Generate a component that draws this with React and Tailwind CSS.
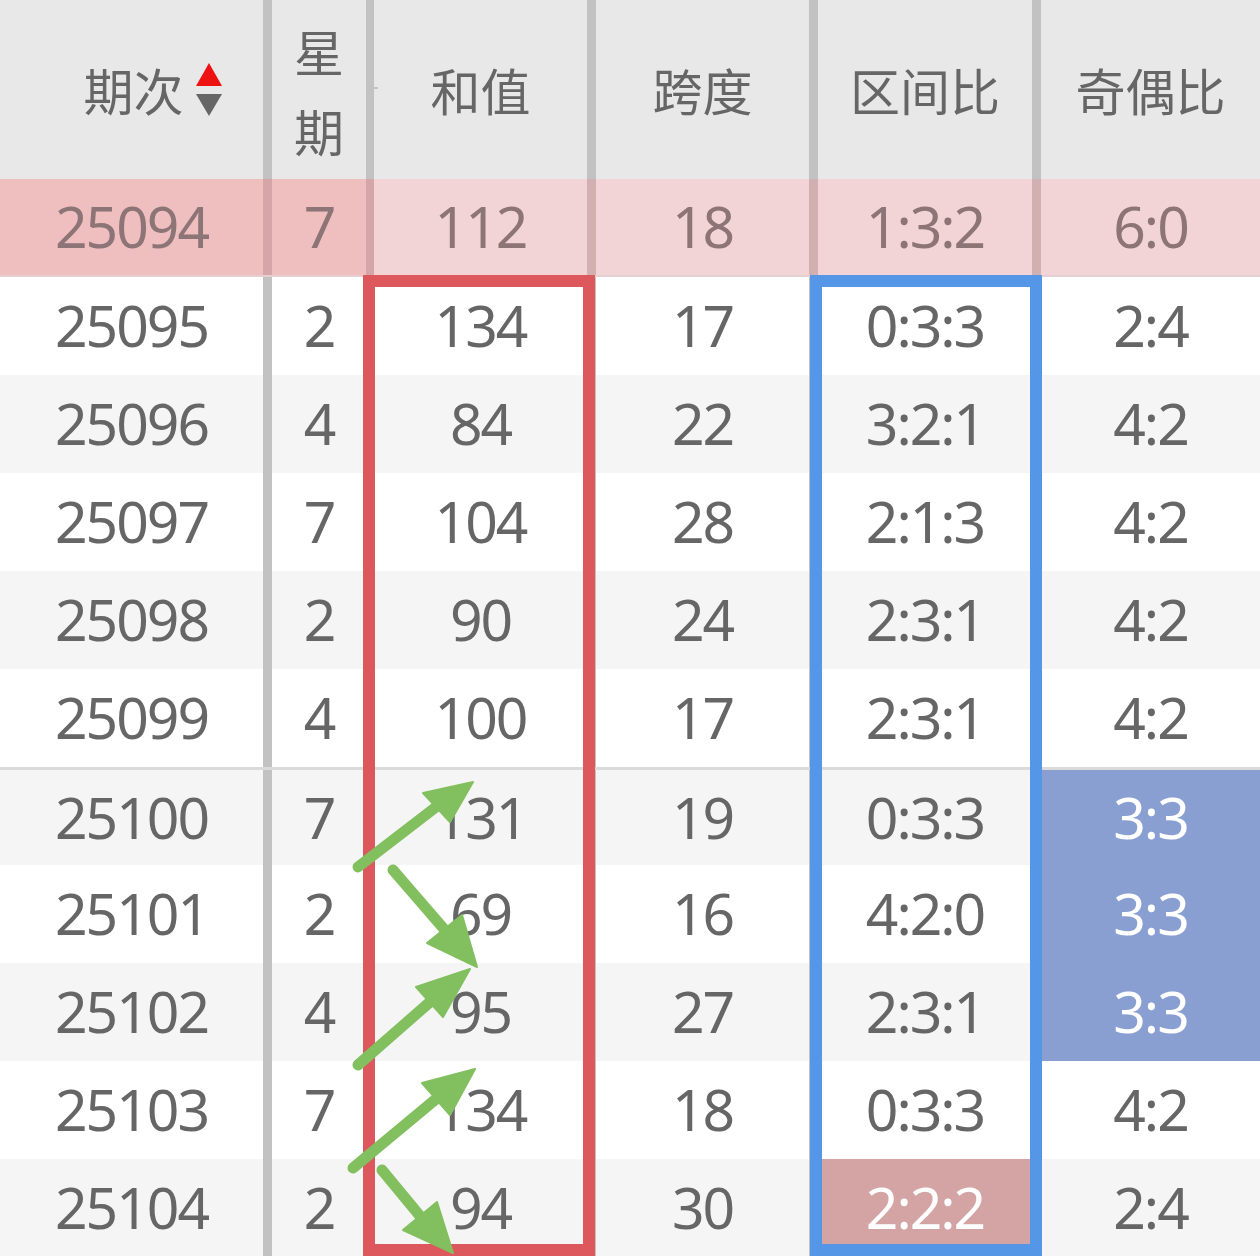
import React from 'react';

const cols = [
  'w-[263px]',
  'w-[103px] border-l-[9px]',
  'w-[221px] border-l-[8px]',
  'w-[222px] border-l-[9px]',
  'w-[223px] border-l-[9px]',
  'w-[228px] border-l-[9px]',
];

const rows = [
  { q: '25094', w: '7', s: '112', k: '18', z: '1:3:2', o: '6:0' },
  { q: '25095', w: '2', s: '134', k: '17', z: '0:3:3', o: '2:4' },
  { q: '25096', w: '4', s: '84', k: '22', z: '3:2:1', o: '4:2' },
  { q: '25097', w: '7', s: '104', k: '28', z: '2:1:3', o: '4:2' },
  { q: '25098', w: '2', s: '90', k: '24', z: '2:3:1', o: '4:2' },
  { q: '25099', w: '4', s: '100', k: '17', z: '2:3:1', o: '4:2' },
  { q: '25100', w: '7', s: '131', k: '19', z: '0:3:3', o: '3:3', oHi: true },
  { q: '25101', w: '2', s: '69', k: '16', z: '4:2:0', o: '3:3', oHi: true },
  { q: '25102', w: '4', s: '95', k: '27', z: '2:3:1', o: '3:3', oHi: true },
  { q: '25103', w: '7', s: '134', k: '18', z: '0:3:3', o: '4:2' },
  { q: '25104', w: '2', s: '94', k: '30', z: '2:2:2', o: '2:4', zHi: true },
];

const arrows = [
  { tail: [358, 867], mid: [436, 807], head: '473,782 423,793 450,822' },
  { tail: [393, 870], mid: [444, 929], head: '477,967 427,943 462,915' },
  { tail: [358, 1065], mid: [430, 1002], head: '470,969 416,987 443,1017' },
  { tail: [353, 1168], mid: [436, 1099], head: '475,1069 422,1083 450,1115' },
  { tail: [382, 1170], mid: [420, 1216], head: '453,1253 403,1230 437,1202' },
];

const num = { fontFamily: '"Noto Sans", "Liberation Sans", sans-serif' };
const cjk = { fontFamily: '"Noto Sans CJK SC", "Noto Sans", sans-serif' };

const Cell = ({ i, className = '', children }) => (
  <div className={`${cols[i]} h-full flex items-center justify-center shrink-0 ${className}`}>
    {children}
  </div>
);

const Header = () => (
  <div className="flex h-[179px] bg-[#e8e8e8] text-[#666666] text-[50px]" style={cjk}>
    <Cell i={0} className="pl-[42px] gap-[12px]">
      <span>期次</span>
      <svg width="26" height="53" viewBox="0 0 26 53">
        <polygon points="13,0 26,23 0,23" fill="#ee1111" />
        <polygon points="0,31 26,31 13,53" fill="#666666" />
      </svg>
    </Cell>
    <Cell i={1} className="border-[#c2c2c2] flex-col leading-[80px]">
      <span>星</span>
      <span>期</span>
    </Cell>
    <Cell i={2} className="border-[#c2c2c2]">和值</Cell>
    <Cell i={3} className="border-[#c2c2c2]">跨度</Cell>
    <Cell i={4} className="border-[#c2c2c2]">区间比</Cell>
    <Cell i={5} className="border-[#c2c2c2]">奇偶比</Cell>
  </div>
);

const Row = ({ r, idx }) => {
  if (idx === 0) {
    return (
      <div className="flex h-[98px] text-[#8d7476] border-b-2 border-[#e6cfd1]">
        <Cell i={0} className="bg-[#efbfc0]">{r.q}</Cell>
        <Cell i={1} className="bg-[#efbfc0] border-[#d5a5a7]">{r.w}</Cell>
        <Cell i={2} className="bg-[#f2d4d6] border-[#d5a5a7]">{r.s}</Cell>
        <Cell i={3} className="bg-[#f2d4d6] border-[#d2b0b2]">{r.k}</Cell>
        <Cell i={4} className="bg-[#f2d4d6] border-[#d2b0b2]">{r.z}</Cell>
        <Cell i={5} className="bg-[#f2d4d6] border-[#d2b0b2]">{r.o}</Cell>
      </div>
    );
  }
  const bg = idx % 2 === 1 ? 'bg-white' : 'bg-[#f5f5f5]';
  const line = idx === 6 ? 'border-t-[3px] border-[#dadada]' : '';
  return (
    <div className={`flex h-[98px] text-[#666666] ${bg} ${line}`}>
      <Cell i={0}>{r.q}</Cell>
      <Cell i={1} className="border-[#c2c2c2]">{r.w}</Cell>
      <Cell i={2} className="border-[#c2c2c2]">{r.s}</Cell>
      <Cell i={3} className="border-[#c2c2c2]">{r.k}</Cell>
      <Cell i={4} className={`border-[#c2c2c2] ${r.zHi ? 'bg-[#d4a3a4] text-white' : ''}`}>{r.z}</Cell>
      <Cell i={5} className={`border-[#c2c2c2] ${r.oHi ? 'bg-[#8a9fd1] text-white' : ''}`}>{r.o}</Cell>
    </div>
  );
};

export default function App() {
  return (
    <div className="relative w-[1260px] h-[1256px] overflow-hidden bg-white">
      <Header />
      <div className="text-[57px] tracking-[-2px]" style={num}>
        {rows.map((r, idx) => (
          <Row key={r.q} r={r} idx={idx} />
        ))}
      </div>

      {/* small tick beside the 星期 column in the header */}
      <div className="absolute left-[374px] top-[87px] w-[4px] h-[2px] bg-[#c2c2c2]" />

      {/* marker boxes */}
      <div className="absolute left-[363px] top-[275px] w-[232px] h-[981px] border-[12px] border-[#dc585c]" />
      <div className="absolute left-[810px] top-[275px] w-[232px] h-[981px] border-[12px] border-[#5596e6]" />

      <svg className="absolute left-0 top-0 pointer-events-none" width="1260" height="1256" viewBox="0 0 1260 1256">
        {arrows.map((a, i) => (
          <g key={i} fill="#82bf5f" stroke="#82bf5f">
            <line x1={a.tail[0]} y1={a.tail[1]} x2={a.mid[0]} y2={a.mid[1]} strokeWidth="11" strokeLinecap="round" />
            <polygon points={a.head} strokeWidth="2" strokeLinejoin="round" />
          </g>
        ))}
      </svg>
    </div>
  );
}
